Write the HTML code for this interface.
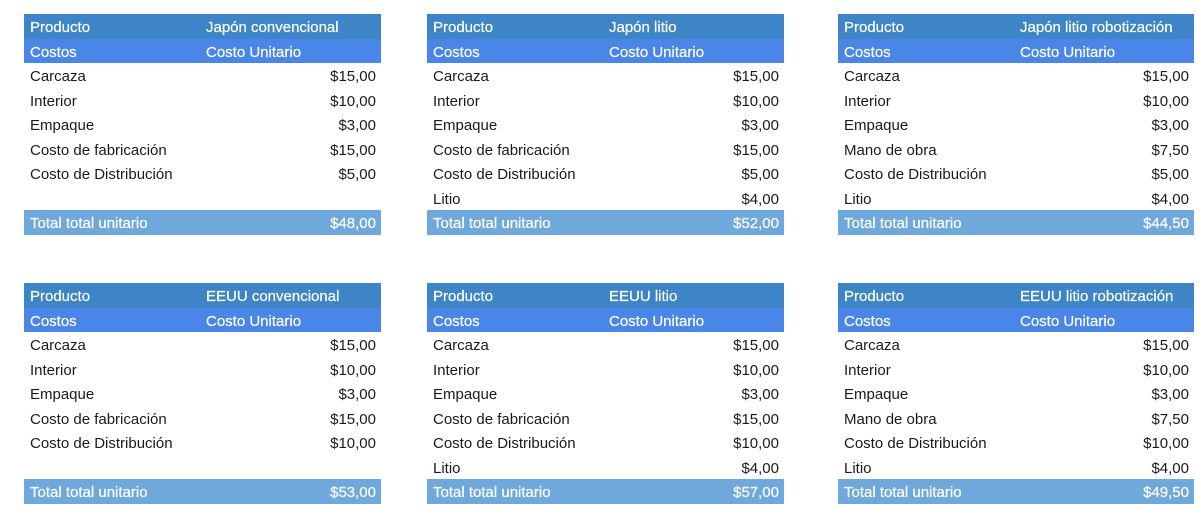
<!DOCTYPE html>
<html><head><meta charset="utf-8"><style>
body{margin:0;width:1204px;height:524px;background:#fff;position:relative;overflow:hidden;font-family:"Liberation Sans",sans-serif;font-size:15px;color:#1a1a1a}
.t{position:absolute}
.r{height:24.5px;line-height:27px;position:relative;white-space:nowrap}
.l{position:absolute;left:6px}
.c{position:absolute}
.v{position:absolute;right:5px}
.h1{background:#3d85c6;color:#fff}
.h2{background:#4a86e8;color:#fff}
.tot{background:#6fa8dc;color:#fff}
.h1,.h2,.tot{-webkit-text-stroke:0.2px #fff}
</style></head><body>

<div class="t" style="left:24px;top:14px;width:357px">
<div class="r h1"><span class="l">Producto</span><span class="c" style="left:182px">Japón convencional</span></div>
<div class="r h2"><span class="l">Costos</span><span class="c" style="left:182px">Costo Unitario</span></div>
<div class="r"><span class="l">Carcaza</span><span class="v">$15,00</span></div>
<div class="r"><span class="l">Interior</span><span class="v">$10,00</span></div>
<div class="r"><span class="l">Empaque</span><span class="v">$3,00</span></div>
<div class="r"><span class="l">Costo de fabricación</span><span class="v">$15,00</span></div>
<div class="r"><span class="l">Costo de Distribución</span><span class="v">$5,00</span></div>
<div class="r"></div>
<div class="r tot"><span class="l">Total total unitario</span><span class="v">$48,00</span></div>
</div>

<div class="t" style="left:427px;top:14px;width:357px">
<div class="r h1"><span class="l">Producto</span><span class="c" style="left:182px">Japón litio</span></div>
<div class="r h2"><span class="l">Costos</span><span class="c" style="left:182px">Costo Unitario</span></div>
<div class="r"><span class="l">Carcaza</span><span class="v">$15,00</span></div>
<div class="r"><span class="l">Interior</span><span class="v">$10,00</span></div>
<div class="r"><span class="l">Empaque</span><span class="v">$3,00</span></div>
<div class="r"><span class="l">Costo de fabricación</span><span class="v">$15,00</span></div>
<div class="r"><span class="l">Costo de Distribución</span><span class="v">$5,00</span></div>
<div class="r"><span class="l">Litio</span><span class="v">$4,00</span></div>
<div class="r tot"><span class="l">Total total unitario</span><span class="v">$52,00</span></div>
</div>

<div class="t" style="left:838px;top:14px;width:356px">
<div class="r h1"><span class="l">Producto</span><span class="c" style="left:182px">Japón litio robotización</span></div>
<div class="r h2"><span class="l">Costos</span><span class="c" style="left:182px">Costo Unitario</span></div>
<div class="r"><span class="l">Carcaza</span><span class="v">$15,00</span></div>
<div class="r"><span class="l">Interior</span><span class="v">$10,00</span></div>
<div class="r"><span class="l">Empaque</span><span class="v">$3,00</span></div>
<div class="r"><span class="l">Mano de obra</span><span class="v">$7,50</span></div>
<div class="r"><span class="l">Costo de Distribución</span><span class="v">$5,00</span></div>
<div class="r"><span class="l">Litio</span><span class="v">$4,00</span></div>
<div class="r tot"><span class="l">Total total unitario</span><span class="v">$44,50</span></div>
</div>

<div class="t" style="left:24px;top:283px;width:357px">
<div class="r h1"><span class="l">Producto</span><span class="c" style="left:182px">EEUU convencional</span></div>
<div class="r h2"><span class="l">Costos</span><span class="c" style="left:182px">Costo Unitario</span></div>
<div class="r"><span class="l">Carcaza</span><span class="v">$15,00</span></div>
<div class="r"><span class="l">Interior</span><span class="v">$10,00</span></div>
<div class="r"><span class="l">Empaque</span><span class="v">$3,00</span></div>
<div class="r"><span class="l">Costo de fabricación</span><span class="v">$15,00</span></div>
<div class="r"><span class="l">Costo de Distribución</span><span class="v">$10,00</span></div>
<div class="r"></div>
<div class="r tot"><span class="l">Total total unitario</span><span class="v">$53,00</span></div>
</div>

<div class="t" style="left:427px;top:283px;width:357px">
<div class="r h1"><span class="l">Producto</span><span class="c" style="left:182px">EEUU litio</span></div>
<div class="r h2"><span class="l">Costos</span><span class="c" style="left:182px">Costo Unitario</span></div>
<div class="r"><span class="l">Carcaza</span><span class="v">$15,00</span></div>
<div class="r"><span class="l">Interior</span><span class="v">$10,00</span></div>
<div class="r"><span class="l">Empaque</span><span class="v">$3,00</span></div>
<div class="r"><span class="l">Costo de fabricación</span><span class="v">$15,00</span></div>
<div class="r"><span class="l">Costo de Distribución</span><span class="v">$10,00</span></div>
<div class="r"><span class="l">Litio</span><span class="v">$4,00</span></div>
<div class="r tot"><span class="l">Total total unitario</span><span class="v">$57,00</span></div>
</div>

<div class="t" style="left:838px;top:283px;width:356px">
<div class="r h1"><span class="l">Producto</span><span class="c" style="left:182px">EEUU litio robotización</span></div>
<div class="r h2"><span class="l">Costos</span><span class="c" style="left:182px">Costo Unitario</span></div>
<div class="r"><span class="l">Carcaza</span><span class="v">$15,00</span></div>
<div class="r"><span class="l">Interior</span><span class="v">$10,00</span></div>
<div class="r"><span class="l">Empaque</span><span class="v">$3,00</span></div>
<div class="r"><span class="l">Mano de obra</span><span class="v">$7,50</span></div>
<div class="r"><span class="l">Costo de Distribución</span><span class="v">$10,00</span></div>
<div class="r"><span class="l">Litio</span><span class="v">$4,00</span></div>
<div class="r tot"><span class="l">Total total unitario</span><span class="v">$49,50</span></div>
</div>

</body></html>
